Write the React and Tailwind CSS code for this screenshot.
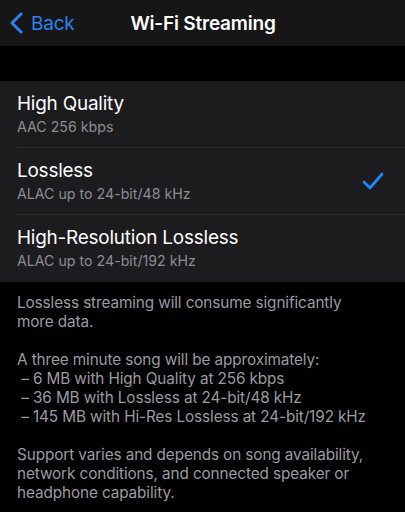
import React from "react";

const rows = [
  { title: "High Quality", sub: "AAC 256 kbps", checked: false },
  { title: "Lossless", sub: "ALAC up to 24-bit/48 kHz", checked: true },
  { title: "High-Resolution Lossless", sub: "ALAC up to 24-bit/192 kHz", checked: false },
];

export default function App() {
  return (
    <div
      className="w-[405px] h-[512px] overflow-hidden bg-black text-white"
      style={{ fontFamily: "Inter, 'Noto Sans', sans-serif" }}
    >
      <div className="h-[46px] bg-[#161616] flex items-center relative">
        <div className="flex items-center pl-[9px] text-[#2a84f0]">
          <svg width="16" height="22" viewBox="0 0 16 22" fill="none">
            <path d="M12 2 L3 11 L12 20" stroke="#2a84f0" strokeWidth="3" strokeLinecap="round" strokeLinejoin="round" />
          </svg>
          <span className="ml-[6px] text-[19px] leading-none tracking-[-0.2px]">Back</span>
        </div>
        <div className="absolute inset-x-0 top-0 h-[46px] flex items-center justify-center pointer-events-none">
          <span className="text-[19px] font-semibold leading-none tracking-[-0.2px] pl-[1px]">Wi-Fi Streaming</span>
        </div>
      </div>
      <div className="h-[35px] bg-black" />
      <div className="bg-[#1c1c1e]">
        {rows.map((r, i) => (
          <div key={i} className="pl-[17px]">
            <div
              className={
                "h-[67px] flex items-center pr-[20px] " +
                (i < rows.length - 1 ? "border-b border-[#2c2c2e]" : "")
              }
            >
              <div className="flex-1 flex flex-col">
                <span className="text-[18.9px] leading-[24px] tracking-[-0.2px] text-white">{r.title}</span>
                <span className="text-[14.2px] leading-[20px] mt-[1px] text-[#8d8d92]">{r.sub}</span>
              </div>
              {r.checked && (
                <svg width="22" height="20" viewBox="0 0 22 20" fill="none" className="mr-[1px]">
                  <path d="M2 11 L8 17 L20 3" stroke="#1f86f5" strokeWidth="2.8" strokeLinecap="round" strokeLinejoin="round" />
                </svg>
              )}
            </div>
          </div>
        ))}
      </div>
      <div className="pl-[17px] pr-[34px] pt-[11px] text-[15.3px] leading-[19px] text-[#9a9aa0] tracking-[-0.1px]">
        <p>Lossless streaming will consume significantly more data.</p>
        <p className="mt-[19px]">A three minute song will be approximately:</p>
        <p>&nbsp;– 6 MB with High Quality at 256 kbps</p>
        <p>&nbsp;– 36 MB with Lossless at 24-bit/48 kHz</p>
        <p className="whitespace-nowrap">&nbsp;– 145 MB with Hi-Res Lossless at 24-bit/192 kHz</p>
        <p className="mt-[19px]">Support varies and depends on song availability, network conditions, and connected speaker or headphone capability.</p>
      </div>
    </div>
  );
}
